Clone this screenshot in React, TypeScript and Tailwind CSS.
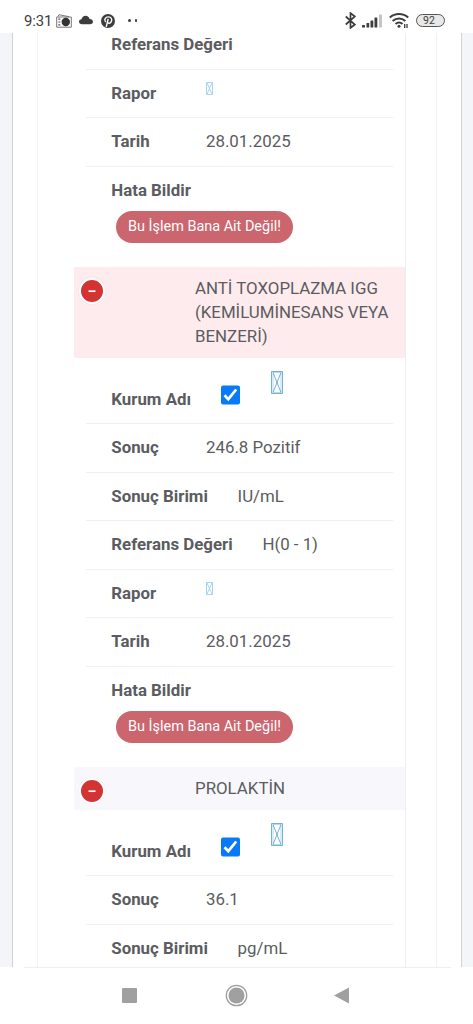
import type { ReactNode } from "react";

function MissingGlyph({ large = false }: { large?: boolean }) {
  return large ? (
    <svg width="12" height="23" viewBox="0 0 12 23" fill="none" stroke="#4c9fca" strokeWidth="0.8">
      <path d="M.5.5h11v22H.5z" />
      <path d="M2 1.500h8v20H2z" strokeWidth="0.4" />
      <path d="M2 1.500l8 20M10 1.500l-8 20" />
    </svg>
  ) : (
    <svg width="7" height="13" viewBox="0 0 7 13" fill="none" stroke="#8fcbe6" strokeWidth="0.8">
      <path d="M.5.5h6v12h-6zM1 1l5 11M6 1L1 12" />
    </svg>
  );
}

function Row({ label, children }: { label: string; children?: ReactNode }) {
  return (
    <div className="mx-3 flex h-[48.5px] shrink-0 items-center border-b border-[#f0f0f0] pl-[25.3px]">
      <span className="mr-[29.7px] min-w-[65px] whitespace-nowrap font-bold">{label}</span>
      <span>{children}</span>
    </div>
  );
}

function ReportRow() {
  return (
    <Row label="Rapor">
      <span className="block pb-[10px]">
        <MissingGlyph />
      </span>
    </Row>
  );
}

function ErrorRow() {
  return (
    <div className="h-[100.2px] shrink-0 pl-[37.3px] pt-[11.5px]">
      <div className="font-bold leading-6">Hata Bildir</div>
      <button className="ml-[4.7px] mt-[8.5px] flex h-8 w-[177px] items-center justify-center whitespace-nowrap rounded-full bg-[#cb656e] text-[14.45px] text-white">
        Bu İşlem Bana Ait Değil!
      </button>
    </div>
  );
}

function Header({ title, tone }: { title: string; tone: "pink" | "gray" }) {
  return (
    <div
      className={
        tone === "pink"
          ? "flex h-[91px] shrink-0 bg-[#feebee] pl-[5px] pt-[9px]"
          : "flex h-[43px] shrink-0 bg-[#f8f7fc] pl-[5px] pt-[9px]"
      }
    >
      <span className="mt-[2px] flex size-[26px] shrink-0 items-center justify-center rounded-full border-2 border-white bg-[#d33333] shadow-[0_0_2px_rgba(0,0,0,0.06)]">
        <svg className="mt-px" width="8" height="4" viewBox="0 0 8 4">
          <path d="M.5 2.200h7" stroke="white" strokeWidth="1.700" />
        </svg>
      </span>
      <span className="ml-[90px] w-[200px] whitespace-pre-line leading-6">{title}</span>
    </div>
  );
}

function InstitutionRow() {
  return (
    <div className="mx-3 flex h-[66.5px] shrink-0 border-b border-[#f0f0f0] pl-[25.3px]">
      <span className="mt-[29.3px] w-[109.7px] font-bold leading-6">Kurum Adı</span>
      <svg className="mt-[27px]" width="19" height="20" viewBox="0 0 19 20">
        <rect y=".5" width="19" height="19" rx="2" fill="#0879f9" />
        <path d="M3.5 10.2l3.8 4L15.2 4.5" fill="none" stroke="white" strokeWidth="2.7" />
      </svg>
      <span className="ml-[31px] mt-[13px]">
        <MissingGlyph large />
      </span>
    </div>
  );
}

function StatusBar() {
  return (
    <header className="flex h-[33px] shrink-0 items-center pl-[24px] pr-[29px] pt-[8px] text-[#3d3d3d]">
      <span className="mt-[2px] w-[32px] whitespace-nowrap text-[14.9px] tracking-[-0.1px]">9:31</span>
      <svg width="16" height="14" viewBox="0 0 16 14">
        <path d="M.7 3h14.6v10.2H.7zM2 2.5L3 .7l10 2" fill="none" stroke="#777" strokeWidth="1" />
        <circle cx="9.8" cy="8" r="4.2" fill="#333" />
        <path d="M2.3 5.2h2M2.3 8h2M2.3 10.8h2" stroke="#555" strokeWidth="1.2" />
      </svg>
      <svg className="-mt-px ml-[7px]" width="14" height="10" viewBox="0 0 14 10" fill="#3d3d3d">
        <path d="M3 9.2C1.300 9.200 0 8.300 0 6.700c0-1.500 1-2.400 2.500-2.500C3 2 4.600.7 6.600.7c2 0 3.600 1.400 4 3.200 2 0 3.400 1.100 3.400 2.800 0 1.600-1.200 2.500-2.900 2.500z" />
      </svg>
      <svg className="ml-2" width="14" height="14" viewBox="0 0 24 24">
        <circle cx="12" cy="12" r="12" fill="#3d3d3d" />
        <path d="M8 13.700C4.500 10 7.500 5 12.700 5c5 0 7 4.600 4.700 8.500-1.700 3-5 3-6 .7M12.300 8.500L9 22" fill="none" stroke="white" strokeWidth="2.400" />
      </svg>
      <span className="ml-[13px] flex gap-[4px]">
        <i className="size-[2.5px] rounded-full bg-[#3d3d3d]" />
        <i className="size-[2.5px] rounded-full bg-[#3d3d3d]" />
      </span>
      <svg className="ml-auto" width="11" height="17" viewBox="0 0 11 17" fill="none" stroke="#3d3d3d" strokeWidth="1.700">
        <path d="M.8 4.500l9 8-4.300 3.400V1.100l4.300 3.400-9 8" />
      </svg>
      <svg className="ml-[6px] mt-px" width="21" height="14" viewBox="0 0 21 14" fill="#3d3d3d">
        <rect y="11" width="3" height="2.500" rx=".6" />
        <rect x="4.500" y="9" width="2.700" height="4.500" rx=".6" />
        <rect x="8.500" y="6.500" width="2.800" height="7" rx=".6" />
        <rect x="12.500" y="3.500" width="2.800" height="10" rx=".6" />
        <rect x="17" y=".5" width="3" height="13" rx=".6" fill="#c6c6c6" />
      </svg>
      <svg className="ml-[6px]" width="21" height="16" viewBox="0 0 21 16" fill="none" stroke="#3d3d3d" strokeWidth="2">
        <path d="M.8 4.600c5.400-4.700 13-4.700 18.400 0M3.600 7.900c3.800-3.300 9-3.300 12.800 0M6.500 11c2.200-1.900 4.800-1.900 7 0" />
        <circle cx="10" cy="13.300" r="1.500" fill="#3d3d3d" stroke="none" />
        <path d="M15.700 15v-4M18 11v4" strokeWidth="1.300" />
      </svg>
      <span className="-mr-px ml-[6px] flex h-[13px] w-[29px] items-center justify-center rounded-full border border-[#555] bg-[#e8e8e8] pr-[3px] text-[10.5px]">
        92
      </span>
    </header>
  );
}

export default function App() {
  return (
    <div className="flex h-[1024px] w-[473px] flex-col overflow-hidden bg-white font-['Roboto',sans-serif] text-[16.85px] text-[#5b5c60]">
      <StatusBar />
      <main className="flex h-[934px] shrink-0 overflow-hidden">
        <div className="w-[13px] shrink-0 border-r border-[#d2d2d4] bg-[#f3f5f9]" />
        <div className="ml-6 flex w-[400px] shrink-0 border-x border-[#f2f2f2] pl-9">
          <div className="-mt-3 flex h-[960px] w-[332px] shrink-0 flex-col border-r border-[#efefef]">
            <Row label="Referans Değeri" />
            <ReportRow />
            <Row label="Tarih">28.01.2025</Row>
            <ErrorRow />
            <Header tone="pink" title={"ANTİ TOXOPLAZMA IGG\n(KEMİLUMİNESANS VEYA\nBENZERİ)"} />
            <InstitutionRow />
            <Row label="Sonuç">246.8 Pozitif</Row>
            <Row label="Sonuç Birimi">IU/mL</Row>
            <Row label="Referans Değeri">H(0 - 1)</Row>
            <ReportRow />
            <Row label="Tarih">28.01.2025</Row>
            <ErrorRow />
            <Header tone="gray" title="PROLAKTİN" />
            <InstitutionRow />
            <Row label="Sonuç">36.1</Row>
            <Row label="Sonuç Birimi">pg/mL</Row>
          </div>
        </div>
        <div className="ml-6 w-3 shrink-0 border-l border-[#d2d2d4] bg-[#f3f5f9]" />
      </main>
      <nav className="flex h-[57px] shrink-0 flex-col bg-white">
        <div className="ml-6 h-px w-[427px] bg-[#efefef]" />
        <div className="flex h-[57px] items-center pl-[122px]">
          <span className="size-[15px] rounded-[1px] bg-[#a0a0a0]" />
          <svg className="ml-[88px]" width="23" height="23" viewBox="0 0 23 23">
            <circle cx="11.500" cy="11.500" r="10.200" fill="none" stroke="#a0a0a0" strokeWidth="1.300" />
            <circle cx="11.500" cy="11.500" r="8" fill="#a0a0a0" />
          </svg>
          <svg className="ml-[86px]" width="15" height="17" viewBox="0 0 15 17" fill="#a0a0a0">
            <path d="M0 8.500L15 .5v16z" />
          </svg>
        </div>
      </nav>
    </div>
  );
}
